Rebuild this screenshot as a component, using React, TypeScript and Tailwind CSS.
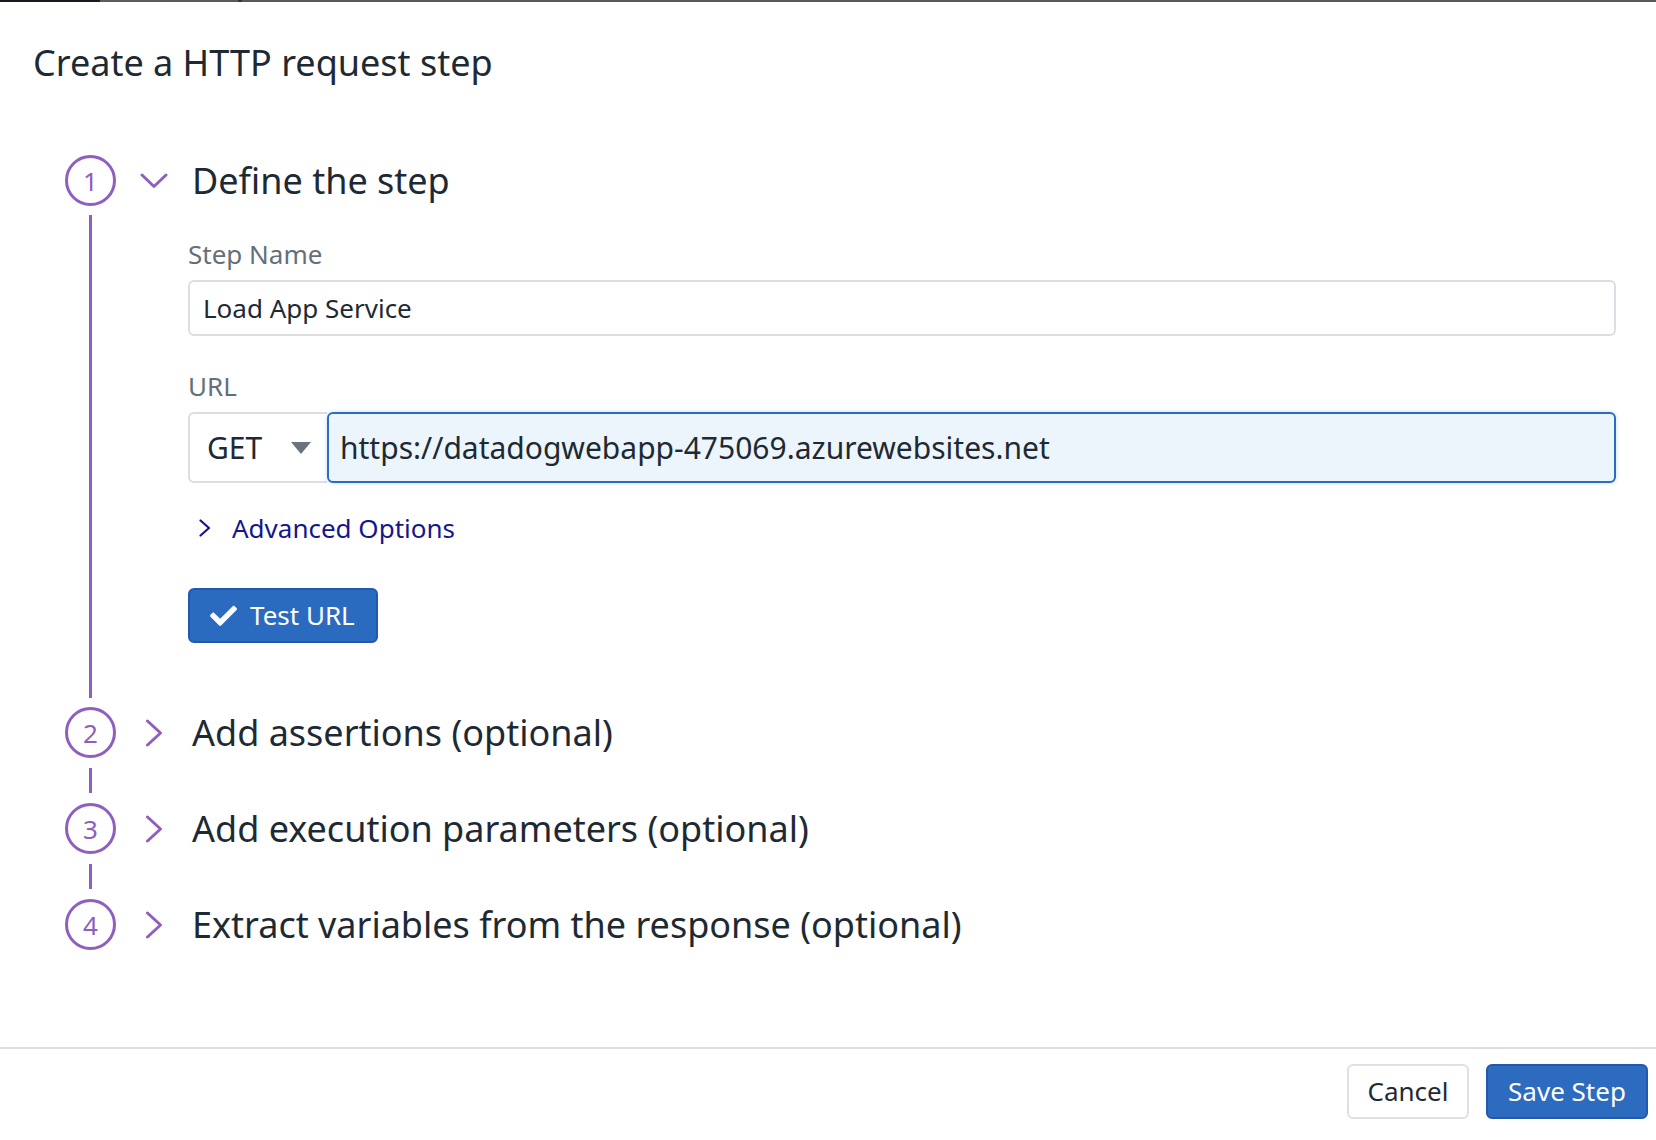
import React from "react";

const purple = "#8e5fbf";

const ChevronDown = () => (
  <svg width="28" height="16" viewBox="0 0 28 16" fill="none">
    <polyline points="2,2 14,13.5 26,2" stroke={purple} strokeWidth="3" strokeLinecap="round" strokeLinejoin="round" />
  </svg>
);

const ChevronRight = () => (
  <svg width="18" height="28" viewBox="0 0 18 28" fill="none">
    <polyline points="2.5,2 15.5,14 2.5,26" stroke={purple} strokeWidth="3" strokeLinecap="round" strokeLinejoin="round" />
  </svg>
);

const StepCircle = ({ n }: { n: number }) => (
  <div className="w-[51px] h-[51px] shrink-0 rounded-full border-[3px] border-[#8e5fbf] flex items-center justify-center text-[26px] leading-none text-[#8e5fbf]">
    {n}
  </div>
);

const Connector = ({ grow }: { grow?: boolean }) => (
  <div className={grow ? "flex-1 flex justify-center py-[9px]" : "h-[45px] flex justify-center py-[10px]"}>
    <div className="w-[3px] h-full bg-[#8e5fbf]" />
  </div>
);

const CollapsedStep = ({ n, title, last }: { n: number; title: string; last?: boolean }) => (
  <div className="flex">
    <div className="w-[51px] flex flex-col items-center">
      <StepCircle n={n} />
      {!last && <Connector />}
    </div>
    <div className="h-[51px] flex items-center">
      <div className="ml-[24px] w-[28px] flex justify-center">
        <ChevronRight />
      </div>
      <div className="ml-[24px] text-[36px] text-[#1e2a33] leading-none">{title}</div>
    </div>
  </div>
);

export default function App() {
  return (
    <div className="w-[1656px] h-[1140px] bg-white flex flex-col font-['Noto_Sans',sans-serif] text-[#1e2a33]">
      <div className="h-[2px] flex shrink-0">
        <div className="w-[100px] bg-[#1b1922]" />
        <div className="w-[66px] bg-[#5c5c5c]" />
        <div className="w-[72px] bg-[#5a5a5a]" />
        <div className="w-[4px] bg-[#3d2b5e]" />
        <div className="flex-1 bg-[#595959]" />
      </div>

      <div className="pl-[33px] pt-[38px] text-[36px] leading-[46px]">Create a HTTP request step</div>

      <div className="pl-[65px] pt-[69px]">
        {/* step 1 */}
        <div className="flex">
          <div className="w-[51px] flex flex-col items-center">
            <StepCircle n={1} />
            <Connector grow />
          </div>
          <div className="flex-1 pr-[40px]">
            <div className="h-[51px] flex items-center">
              <div className="ml-[24px] w-[28px] flex justify-center">
                <ChevronDown />
              </div>
              <div className="ml-[24px] text-[36px] leading-none">Define the step</div>
            </div>
            <div className="pl-[72px] pt-[30px] pb-[64px]">
              <div className="text-[26px] leading-[36px] text-[#646f79]">Step Name</div>
              <div className="mt-[8px] h-[56px] rounded-[6px] border-2 border-[#dddee3] flex items-center pl-[13px] text-[26px]">
                Load App Service
              </div>
              <div className="mt-[32px] text-[26px] leading-[36px] text-[#646f79]">URL</div>
              <div className="mt-[8px] h-[71px] flex">
                <div className="w-[139px] rounded-l-[6px] border-2 border-r-0 border-[#dddee3] flex items-center justify-between pl-[17px] pr-[16px] text-[30px]">
                  <span>GET</span>
                  <svg width="20" height="12" viewBox="0 0 20 12">
                    <polygon points="0,0 20,0 10,12" fill="#6b737b" />
                  </svg>
                </div>
                <div className="flex-1 rounded-[6px] border-2 border-[#2b6cc0] bg-[#edf5fc] shadow-[0_0_4px_rgba(43,108,192,0.25)] flex items-center pl-[11px] text-[30px]">
                  https://datadogwebapp-475069.azurewebsites.net
                </div>
              </div>
              <div className="mt-[27px] h-[36px] flex items-center text-[26px] text-[#16168c]">
                <svg className="ml-[11px]" width="12" height="18" viewBox="0 0 12 18" fill="none">
                  <polyline points="1.5,1.5 10,9 1.5,16.5" stroke="#16168c" strokeWidth="2.2" strokeLinecap="round" strokeLinejoin="round" />
                </svg>
                <span className="ml-[21px]">Advanced Options</span>
              </div>
              <button className="mt-[42px] w-[190px] h-[55px] rounded-[6px] bg-[#2b6bbf] border-2 border-[#2259ae] flex items-center text-white text-[26px]">
                <svg className="ml-[20px]" width="27" height="21" viewBox="0 0 512 400">
                  <path
                    fill="white"
                    d="M173.9 389.8L7.5 223.4c-10-10-10-26.2 0-36.2l36.2-36.2c10-10 26.2-10 36.2 0L192 263.1 432.1 23c10-10 26.2-10 36.2 0l36.2 36.2c10 10 10 26.2 0 36.2L210.1 389.8c-10 10-26.2 10-36.2 0z"
                  />
                </svg>
                <span className="ml-[13px]">Test URL</span>
              </button>
            </div>
          </div>
        </div>

        <CollapsedStep n={2} title="Add assertions (optional)" />
        <CollapsedStep n={3} title="Add execution parameters (optional)" />
        <CollapsedStep n={4} title="Extract variables from the response (optional)" last />
      </div>

      <div className="flex-1" />

      <div className="h-[93px] border-t-2 border-[#dcdde3] flex justify-end items-start gap-[17px] pt-[15px] pr-[8px]">
        <button className="w-[122px] h-[55px] rounded-[6px] border-2 border-[#dfe0e5] bg-white text-[26px] text-[#1e2a33]">
          Cancel
        </button>
        <button className="w-[162px] h-[55px] rounded-[6px] border-2 border-[#2259ae] bg-[#2d6bbf] text-[26px] text-white">
          Save Step
        </button>
      </div>
    </div>
  );
}
